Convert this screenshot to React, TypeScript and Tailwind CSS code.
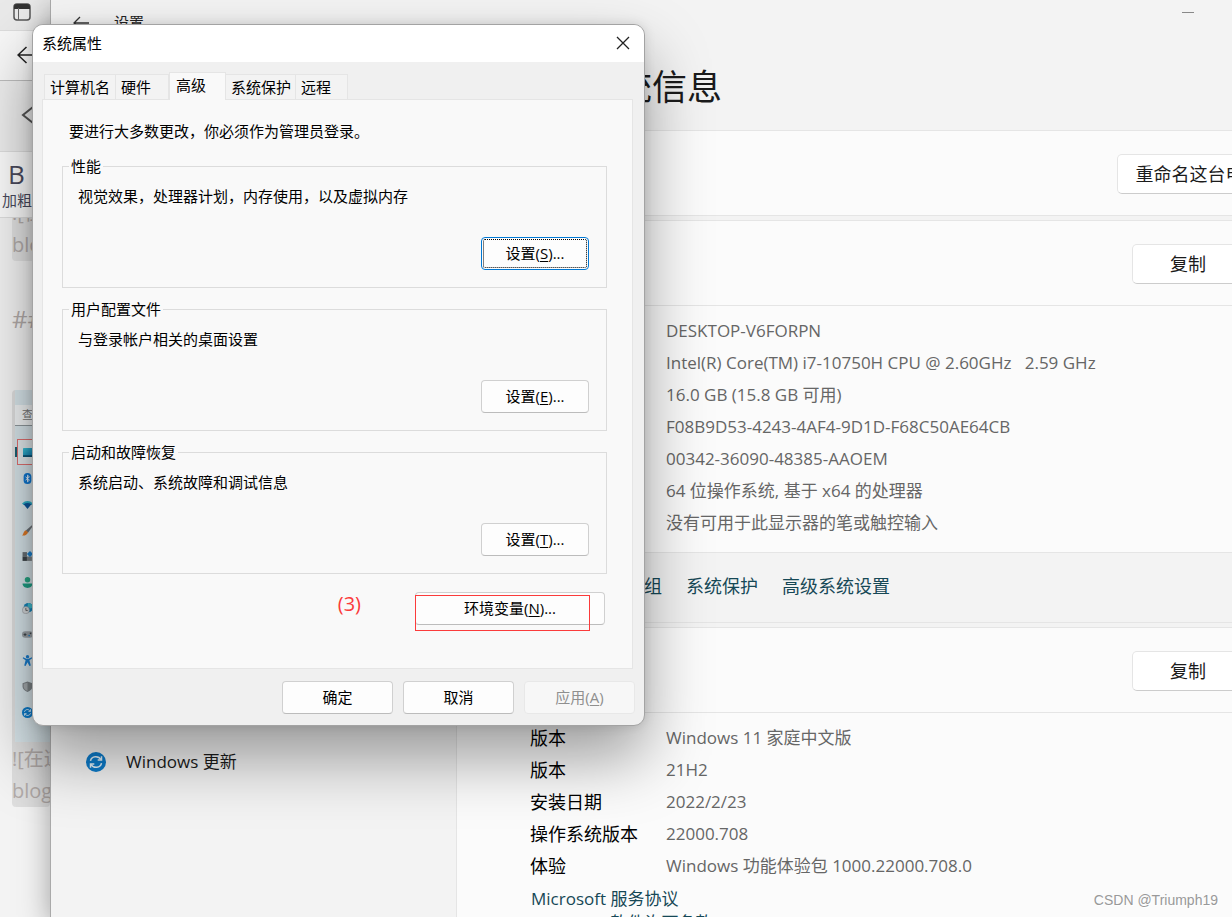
import type { ReactNode } from "react";
import { clsx } from "clsx";

function MonitorIcon() {
  return (
    <svg viewBox="0 0 20 20" className="size-full">
      <defs>
        <linearGradient id="monitor" x1="0" y1="0" x2="1" y2="1">
          <stop offset="0" stopColor="#3cc4d8" />
          <stop offset="1" stopColor="#0b6fa8" />
        </linearGradient>
      </defs>
      <rect x="0" y="2" width="20" height="16" rx="1" fill="url(#monitor)" />
      <rect x="0" y="15" width="20" height="3" fill="#0c4f70" />
    </svg>
  );
}

function BluetoothIcon() {
  return (
    <svg viewBox="0 0 20 20" className="size-full">
      <rect x="3" y="0" width="14" height="20" rx="7" fill="#0f78d4" />
      <path d="M6.500 7l7 6-3.500 3V4l3.500 3-7 6" fill="none" stroke="#fff" strokeWidth="1.500" />
    </svg>
  );
}

function WifiIcon() {
  return (
    <svg viewBox="0 0 20 20" className="size-full">
      <path d="M0 8Q10-1 20 8l-3 3H3z" fill="#2eb0c9" />
      <path d="M3 9.500Q10 5 17 9.500L10 18z" fill="#0c559c" />
    </svg>
  );
}

function BrushIcon() {
  return (
    <svg viewBox="0 0 20 20" className="size-full">
      <path d="M18.500 0L20 1.500 11 14l-4-4z" fill="#6d747a" />
      <path d="M7 9.500l4 4C9 18 5 20 0 19c3-2 2-7 7-9.500z" fill="#e07b28" />
    </svg>
  );
}

function AppsIcon() {
  return (
    <svg viewBox="0 0 20 20" className="size-full">
      <rect x="1" y="2" width="8" height="8" fill="#6b7277" />
      <rect x="1" y="10" width="8" height="8" fill="#3d4449" />
      <rect x="9" y="10" width="9" height="8" fill="#7c8388" />
      <path d="M14.500 0l5.500 5.500-5.500 5.500L9 5.500z" fill="#1b82cf" />
    </svg>
  );
}

function AccountIcon() {
  return (
    <svg viewBox="0 0 20 20" className="size-full">
      <circle cx="10" cy="5" r="5" fill="#28a886" />
      <path d="M1 12h18c0 5-4 8-9 8s-9-3-9-8z" fill="#1fa187" />
    </svg>
  );
}

function ClockGlobeIcon() {
  return (
    <svg viewBox="0 0 20 20" className="size-full">
      <circle cx="11.500" cy="8.500" r="8.500" fill="#1687bd" />
      <path d="M11 0c5 0 9 4 9 8l-5 2-5-3z" fill="#42bfd2" />
      <circle cx="7" cy="13" r="6.500" fill="#d5d9db" stroke="#92999d" />
      <path d="M7 9v4.500h3.500" fill="none" stroke="#555" strokeWidth="1.500" />
    </svg>
  );
}

function GamepadIcon() {
  return (
    <svg viewBox="0 0 20 20" className="size-full">
      <rect x="0" y="4" width="20" height="12" rx="6" fill="#9aa1a6" />
      <path d="M3 10h5M5.500 7.500v5" stroke="#41484d" strokeWidth="2" />
      <circle cx="13" cy="12" r="1.500" fill="#1b82cf" />
      <circle cx="15.500" cy="8" r="1.500" fill="#41484d" />
    </svg>
  );
}

function AccessibilityIcon() {
  return (
    <svg viewBox="0 0 20 20" className="size-full">
      <circle cx="10" cy="3" r="3" fill="#1b7fd0" />
      <path
        d="M2 4l6 3h4l6-3 .7 2-5.200 3.500L16 19l-2.500 1L10 13l-3.500 7L4 19l2.500-9.500L1.300 6z"
        fill="#1b7fd0"
      />
    </svg>
  );
}

function ShieldIcon() {
  return (
    <svg viewBox="0 0 20 20" className="size-full">
      <path d="M10 1l9 3v6c0 5-4 8-9 10-5-2-9-5-9-10V4z" fill="#7d8488" />
      <path d="M10 3v15c-4-1.500-7-4-7-8V5z" fill="#a6acaf" />
    </svg>
  );
}

function UpdateIcon() {
  return (
    <svg viewBox="0 0 20 20" className="size-full">
      <circle cx="10" cy="10" r="10" fill="#0d7ccb" />
      <g fill="none" stroke="#e6f3fb" strokeWidth="1.500">
        <path d="M4.500 8.800C5.500 3.800 12.500 3.200 15 7.600" />
        <path d="M15.500 4.200v3.800h-3.800" />
        <path d="M15.500 11.200C14.500 16.200 7.500 16.800 5 12.400" />
        <path d="M4.500 15.800V12h3.800" />
      </g>
    </svg>
  );
}

const NAV = [
  { label: "系统", icon: MonitorIcon },
  { label: "蓝牙和其他设备", icon: BluetoothIcon },
  { label: "网络 & Internet", icon: WifiIcon },
  { label: "个性化", icon: BrushIcon },
  { label: "应用", icon: AppsIcon },
  { label: "帐户", icon: AccountIcon },
  { label: "时间和语言", icon: ClockGlobeIcon },
  { label: "游戏", icon: GamepadIcon },
  { label: "辅助功能", icon: AccessibilityIcon },
  { label: "隐私和安全性", icon: ShieldIcon },
  { label: "Windows 更新", icon: UpdateIcon },
];

const DEVICE = [
  ["设备名称", "DESKTOP-V6FORPN"],
  ["处理器", "Intel(R) Core(TM) i7-10750H CPU @ 2.60GHz   2.59 GHz"],
  ["机带 RAM", "16.0 GB (15.8 GB 可用)"],
  ["设备 ID", "F08B9D53-4243-4AF4-9D1D-F68C50AE64CB"],
  ["产品 ID", "00342-36090-48385-AAOEM"],
  ["系统类型", "64 位操作系统, 基于 x64 的处理器"],
  ["笔和触控", "没有可用于此显示器的笔或触控输入"],
];

const WINDOWS_SPEC = [
  ["版本", "Windows 11 家庭中文版"],
  ["版本", "21H2"],
  ["安装日期", "2022/2/23"],
  ["操作系统版本", "22000.708"],
  ["体验", "Windows 功能体验包 1000.22000.708.0"],
];

const TABS = [
  { label: "计算机名", width: "w-[72px]" },
  { label: "硬件", width: "w-[53px]" },
  { label: "高级", width: "w-[57px]" },
  { label: "系统保护", width: "w-[70px]" },
  { label: "远程", width: "w-[52px]" },
];

const GROUPS = [
  { title: "性能", text: "视觉效果，处理器计划，内存使用，以及虚拟内存", accessKey: "S" },
  { title: "用户配置文件", text: "与登录帐户相关的桌面设置", accessKey: "E" },
  { title: "启动和故障恢复", text: "系统启动、系统故障和调试信息", accessKey: "T" },
];

function BrowserWindow() {
  return (
    <section className="flex w-[50px] shrink-0 flex-col overflow-hidden whitespace-nowrap bg-[#f3f3f3]">
      <div className="flex h-[31px] shrink-0 items-start border-b border-[#dcdcdc] bg-[#e9e9e9] pt-[3px] pl-[13px]">
        <svg viewBox="0 0 18 18" className="size-[18px]">
          <rect x="1" y="1" width="16" height="16" rx="3" fill="none" stroke="#555" strokeWidth="1.500" />
          <path d="M1 6V4a3 3 0 013-3h10a3 3 0 013 3v2z" fill="#333" />
          <path d="M5.500 5v12" stroke="#666" />
        </svg>
      </div>
      <div className="flex h-[50px] shrink-0 items-center border-b border-[#bdbdbd] bg-[#f7f7f7] pb-px pl-[17px]">
        <svg viewBox="0 0 20 18" className="h-[18px] w-[20px]" fill="none" stroke="#222" strokeWidth="1.500">
          <path d="M9.500 1L1 9l8.500 8M1 9h19" />
        </svg>
      </div>
      <div className="flex h-[70px] shrink-0 items-center bg-[#ededed] pb-[2px] pl-[21px]">
        <svg viewBox="0 0 12 18" className="h-[18px] w-[12px]" fill="none" stroke="#555" strokeWidth="2">
          <path d="M12 1L2 9l10 8" />
        </svg>
      </div>
      <div className="flex h-[67px] shrink-0 flex-col border-y border-[#dedede] bg-[#fbfbfb] pt-[8px] pl-[2px] text-[#4a4a5c]">
        <span className="pl-[6px] text-[26px] leading-[28px]">B</span>
        <span className="text-[15px] leading-6">加粗</span>
      </div>
      <div className="flex-1 text-[20px] leading-8 text-[#b3acaa]">
        <div className="ml-3 h-[43px] overflow-hidden rounded-b bg-[#e2e2e2]">
          <div className="-mt-[21px]">![在这里</div>
          <div>blog.csdn</div>
        </div>
        <div className="mt-[42px] ml-3 text-[24px]">###</div>
        <div className="mt-[55px] ml-3 rounded bg-[#dedede]">
          <div className="ml-[3px] bg-[#d8e5ea] pt-[15px] pb-[17px]">
            <div className="mb-[13px] h-[21px] border-b border-[#8f989c] bg-[#f0f3f4] pl-[7px] text-[11px] leading-5 text-[#777]">
              查找设置
            </div>
            {NAV.map(({ label, icon: Icon }, i) => (
              <div key={label} className="flex h-[26px] items-center">
                <span className={clsx("h-[10px] w-[2px]", i === 0 && "bg-[#1c6273]")} />
                <span
                  className={clsx(
                    "flex h-full flex-1 items-center pl-[5px]",
                    i === 0 && "border border-r-0 border-[#e07070] bg-[#e3eaed] pl-[4px]",
                  )}
                >
                  <span className="size-[11px]">
                    <Icon />
                  </span>
                </span>
              </div>
            ))}
          </div>
          <div className="pt-px">![在这里</div>
          <div>blog.csdn</div>
        </div>
      </div>
    </section>
  );
}

function SettingsButton({ children, className }: { children: ReactNode; className: string }) {
  return (
    <button
      type="button"
      className={clsx(
        "h-10 shrink-0 rounded-[5px] border border-[#e5e5e5] border-b-[#cccccc] bg-white text-[18px] whitespace-nowrap text-[#1b1b1b]",
        className,
      )}
    >
      {children}
    </button>
  );
}

function CopyHeader() {
  return (
    <div className="flex h-[85px] items-center justify-end border-b border-[#e5e5e5] pt-[2px] pr-[55px]">
      <SettingsButton className="w-[112px]">复制</SettingsButton>
    </div>
  );
}

function SpecList({ rows }: { rows: string[][] }) {
  return (
    <dl className="grid grid-cols-[136px_1fr] text-[18px] leading-8">
      {rows.map(([name, value], i) => (
        <div key={i} className="contents">
          <dt className="text-black">{name}</dt>
          <dd className="text-[17px] whitespace-pre text-[#666666]">{value}</dd>
        </div>
      ))}
    </dl>
  );
}

function SettingsWindow() {
  return (
    <section className="relative -mr-[68px] flex min-w-0 flex-1 overflow-visible border-l border-[#a9a9a9] bg-[#f3f3f3] shadow-[0_8px_28px_rgba(0,0,0,0.35)]">
      <aside className="w-[405px] shrink-0">
        <header className="flex h-[45px] items-center gap-[25px] pl-[22px] text-[15px] text-[#222]">
          <svg viewBox="0 0 16 14" className="h-[14px] w-[16px]" fill="none" stroke="#333" strokeWidth="1.300">
            <path d="M7 1L1 7l6 6M1 7h15" />
          </svg>
          设置
        </header>
        <nav className="mt-[192px]" aria-label="设置">
          {NAV.map(({ label, icon: Icon }) => (
            <a
              key={label}
              href="#"
              className="flex h-[50px] items-center gap-5 pl-[35px] text-[17px] text-[#1b1b1b]"
            >
              <span className="size-5">
                <Icon />
              </span>
              {label}
            </a>
          ))}
        </nav>
      </aside>

      <main className="flex min-w-0 flex-1 flex-col">
        <div className="flex h-[25px] shrink-0 items-center justify-end pr-[106px]">
          <button type="button" aria-label="最小化" className="flex h-5 w-3 items-center">
            <span className="h-px w-3 bg-[#888]" />
          </button>
        </div>
        <h1 className="h-[105px] shrink-0 pt-[36px] pl-[126px] text-[35px] leading-[52px] text-[#1b1b1b]">系统信息</h1>
        <div className="flex h-[86px] shrink-0 items-center justify-end border border-[#e5e5e5] bg-[#fbfbfb] pt-[2px] pr-[19px]">
          <SettingsButton className="w-[163px]">重命名这台电脑</SettingsButton>
        </div>

        <div className="mt-1 shrink-0 border border-[#e5e5e5] bg-[#fbfbfb]">
          <CopyHeader />
          <div className="border-b border-[#e5e5e5] pt-[9px] pb-[13px] pl-[73px]">
            <SpecList rows={DEVICE} />
          </div>
          <div className="flex h-[69px] items-center gap-6 bg-[#f3f3f3] pb-[2px] pl-[19px] text-[18px] whitespace-nowrap text-[#164856]">
            <span className="text-black">相关链接</span>
            <a href="#">域或工作组</a>
            <a href="#">系统保护</a>
            <a href="#">高级系统设置</a>
          </div>
        </div>

        <div className="mt-1 flex-1 border border-[#e5e5e5] bg-[#fbfbfb]">
          <CopyHeader />
          <div className="flex flex-col pt-[9px] pl-[73px]">
            <SpecList rows={WINDOWS_SPEC} />
            <div className="mt-[5px] flex flex-col items-start pl-px text-[17px] leading-6 text-[#164856]">
              <a href="#">Microsoft 服务协议</a>
              <a href="#">Microsoft 软件许可条款</a>
            </div>
          </div>
        </div>
      </main>
    </section>
  );
}

function DialogButton({
  label,
  accessKey,
  disabled,
  className,
}: {
  label: string;
  accessKey?: string;
  disabled?: boolean;
  className: string;
}) {
  return (
    <button
      type="button"
      disabled={disabled}
      className={clsx(
        "h-[33px] rounded border pb-[2px]",
        disabled ? "border-[#e8e8e8] bg-[#f7f7f7] text-[#8f8f8f]" : "bg-[#fdfdfd] text-black",
        className,
      )}
    >
      {label}
      {accessKey && (
        <>
          (<u className="underline-offset-2">{accessKey}</u>){!disabled && "..."}
        </>
      )}
    </button>
  );
}

function SystemProperties() {
  return (
    <div
      role="dialog"
      aria-label="系统属性"
      className="absolute top-[24px] left-[32px] w-[613px] overflow-hidden rounded-[11px] border border-[#a3a3a3] bg-[#f0f0f0] text-[15px] leading-5 text-black shadow-[0_32px_64px_rgba(0,0,0,0.38),0_0_12px_rgba(0,0,0,0.12)]"
    >
      <header className="flex h-[37px] items-center justify-between bg-white pr-[14px] pb-[2px] pl-[9px]">
        <span>系统属性</span>
        <button type="button" aria-label="关闭">
          <svg viewBox="0 0 14 14" className="size-[14px]" fill="none" stroke="#222" strokeWidth="1.300">
            <path d="M1 1l12 12M13 1L1 13" />
          </svg>
        </button>
      </header>

      <div className="pt-[10px] pr-[11px] pl-[9px]">
        <div role="tablist" className="flex h-[27px] items-end pl-[2px]">
          {TABS.map(({ label, width }) => {
            const active = label === "高级";
            return (
              <button
                key={label}
                type="button"
                role="tab"
                aria-selected={active}
                className={clsx(
                  "border border-b-0 border-[#e5e5e5] text-left whitespace-nowrap",
                  width,
                  active
                    ? "relative -mb-px h-[28px] bg-[#f9f9f9] pb-[4px] pl-[6px]"
                    : "h-[25px] border-l-0 bg-[#f3f3f3] pl-[5px] first:border-l",
                )}
              >
                {label}
              </button>
            );
          })}
        </div>
        <div role="tabpanel" className="border border-[#e5e5e5] bg-[#f9f9f9] pt-[21px] pr-[25px] pb-[43px] pl-[19px]">
          <p className="mb-[15px] pl-[7px]">要进行大多数更改，你必须作为管理员登录。</p>
          <div className="flex flex-col gap-[11px]">
            {GROUPS.map(({ title, text, accessKey }, i) => (
              <fieldset key={title} className="border border-[#dcdcdc] pr-[17px] pb-[17px] pl-[15px]">
                <legend className="-ml-[9px] px-[2px]">{title}</legend>
                <p className="pt-[10px]">{text}</p>
                <div className="mt-[31px] flex justify-end">
                  <DialogButton
                    label="设置"
                    accessKey={accessKey}
                    className={clsx(
                      "w-[108px]",
                      i === 0
                        ? "border-[#0078d4] outline-1 -outline-offset-3 outline-black outline-dotted"
                        : "border-[#d0d0d0] border-b-[#bcbcbc]",
                    )}
                  />
                </div>
              </fieldset>
            ))}
          </div>
          <div className="mt-[18px] flex items-start justify-end gap-[54px] pr-[2px]">
            <span className="font-['Open_Sans',sans-serif] text-[20px] leading-6 text-[#fb3b3b]">(3)</span>
            <div className="relative">
              <DialogButton label="环境变量" accessKey="N" className="w-[190px] border-[#d0d0d0] border-b-[#bcbcbc]" />
              <span className="absolute top-[3px] left-0 h-[36px] w-[175px] border border-[#fb3b3b]" />
            </div>
          </div>
        </div>
      </div>

      <footer className="flex justify-end gap-[10px] pt-3 pr-[9px] pb-[11px]">
        <DialogButton label="确定" className="w-[111px] border-[#d0d0d0] border-b-[#bcbcbc]" />
        <DialogButton label="取消" className="w-[111px] border-[#d0d0d0] border-b-[#bcbcbc]" />
        <DialogButton label="应用" accessKey="A" disabled className="w-[111px]" />
      </footer>
    </div>
  );
}

export default function App() {
  return (
    <div className="relative flex h-screen overflow-hidden bg-[#f3f3f3] font-['Open_Sans','Noto_Sans_CJK_SC',sans-serif]">
      <BrowserWindow />
      <SettingsWindow />
      <SystemProperties />
      <div className="absolute right-[14px] bottom-[7px] font-['Liberation_Sans',sans-serif] text-[14px] leading-5 text-[#999] [text-shadow:1px_1px_1px_#fff]">
        CSDN @Triumph19
      </div>
    </div>
  );
}
